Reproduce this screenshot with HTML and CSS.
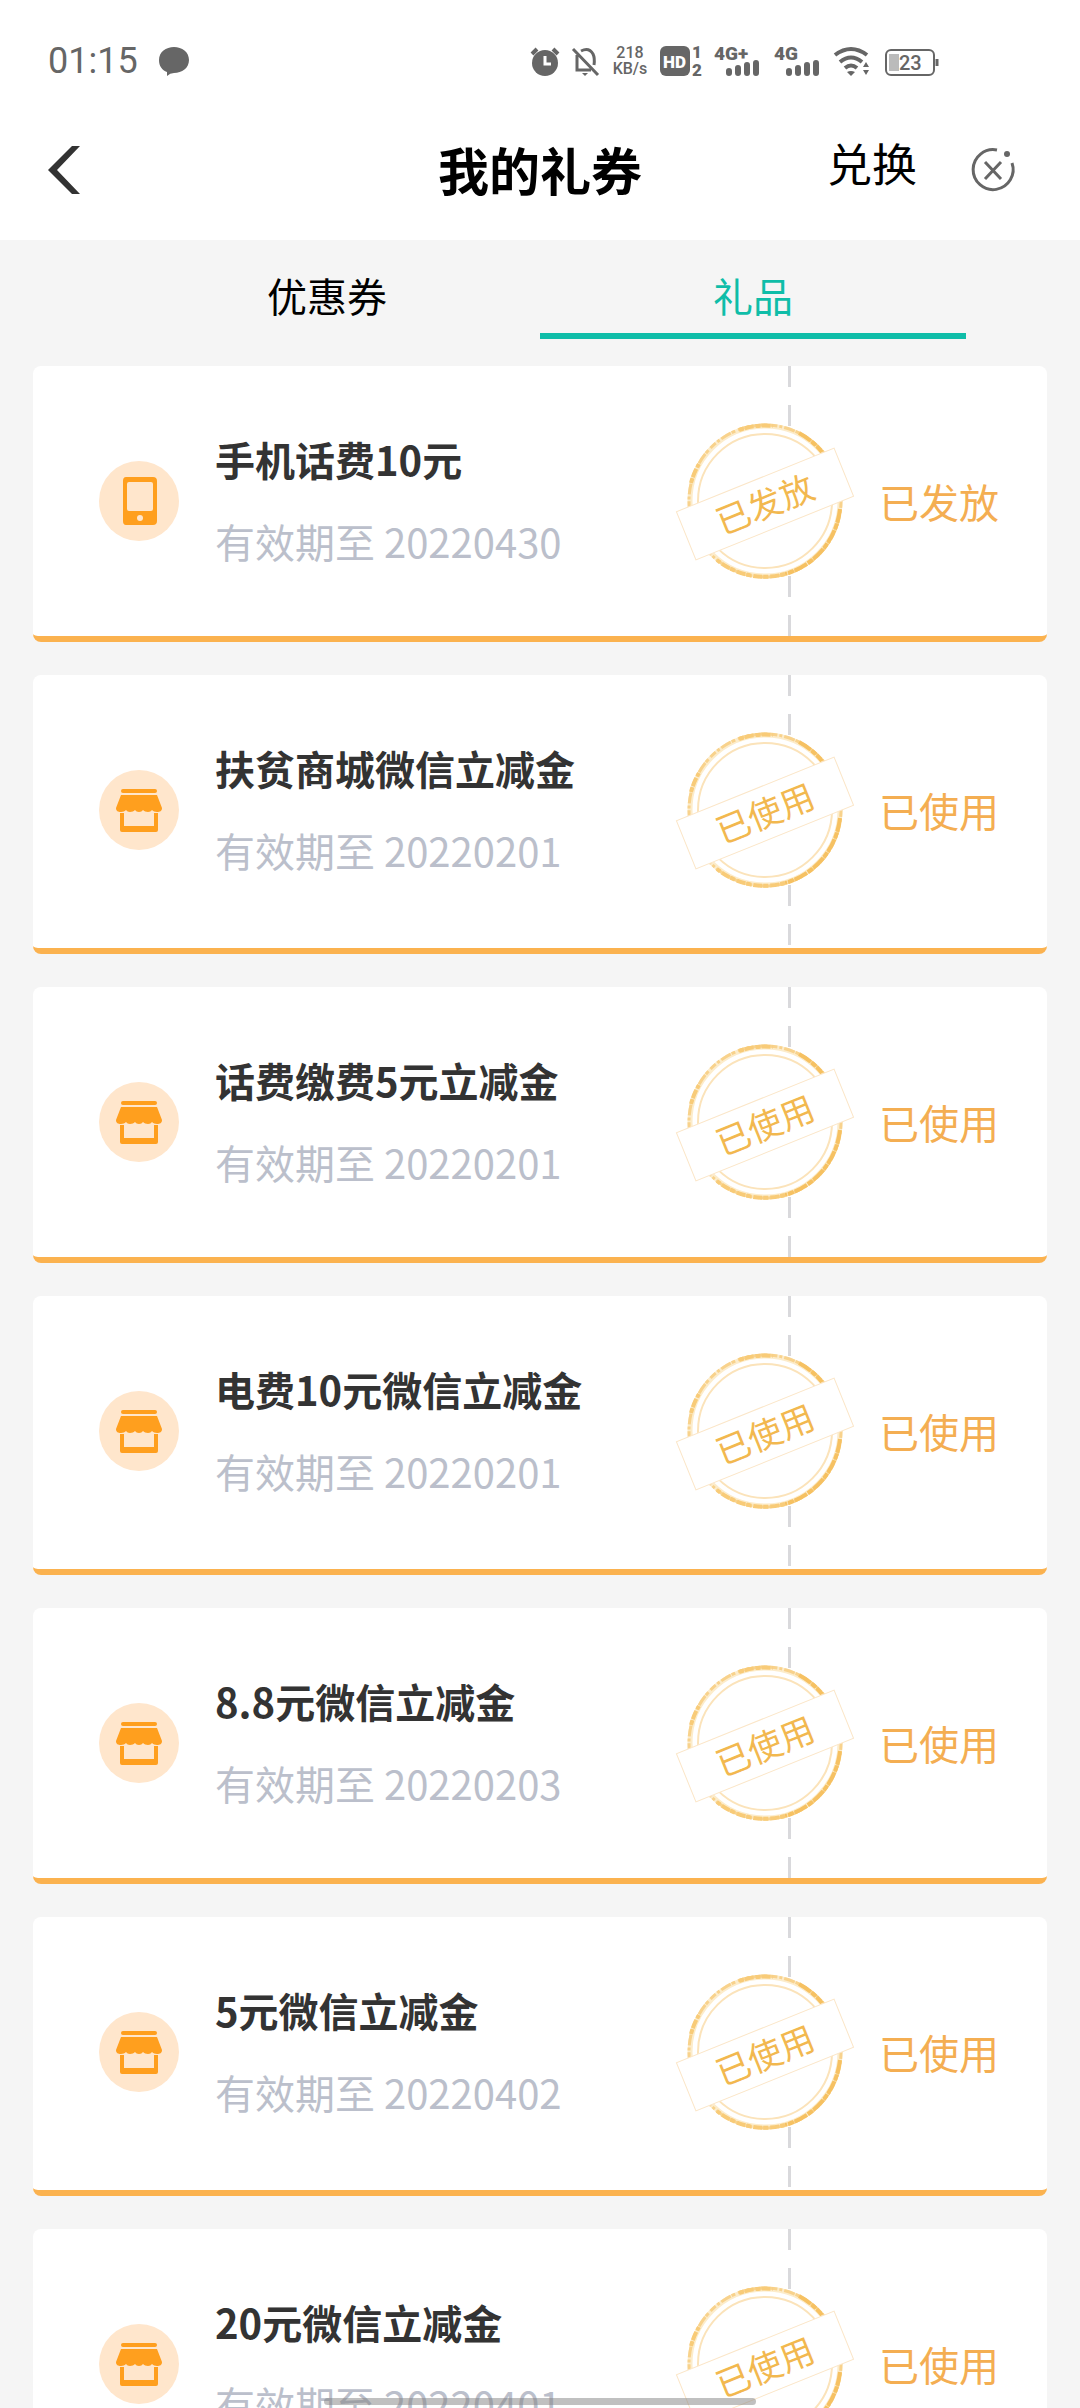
FILE: index.html
```html
<!DOCTYPE html>
<html lang="zh-CN">
<head>
    <meta charset="UTF-8">
    <meta name="viewport" content="width=device-width, initial-scale=1.0">
    <title>我的礼券</title>
    <link rel="stylesheet" href="styles.css">
</head>
<body>
    <!-- Shared icons -->
    <svg class="sprite" aria-hidden="true">
        <symbol id="icon-shop" viewBox="0 0 80 80">
            <rect x="22" y="19" width="36" height="4" rx="2"/>
            <path d="M22 25h36l5 13c0 3-2 4-5 4-2 0-4-1-5-2-1 1-2 2-4 2s-4-1-5-2c-1 1-2 2-4 2s-3-1-4-2c-1 1-3 2-5 2s-3-1-4-2c-1 1-3 2-5 2-3 0-5-1-5-4z"/>
            <path d="M21 43h4v13h30V43h4v17q0 2-2 2H23q-2 0-2-2z"/>
        </symbol>
        <symbol id="icon-phone" viewBox="0 0 80 80">
            <path fill-rule="evenodd" d="M27 16h27q4 0 4 4v40q0 4-4 4H27q-3 0-3-4V20q0-4 3-4zm3 5q-2 0-2 2v25q0 2 2 2h22q2 0 2-2V23q0-2-2-2z"/>
            <circle class="phone-key" cx="41" cy="57" r="3"/>
        </symbol>
        <symbol id="stamp-ring" viewBox="0 0 180 160">
            <circle class="stamp-fill" cx="90" cy="80" r="78"/>
            <circle class="ring-base" cx="90" cy="80" r="75"/>
            <circle class="ring-grain" cx="90" cy="80" r="76"/>
            <circle class="ring-inner" cx="90" cy="80" r="67"/>
            <path class="ring-heavy" d="M124 12A76 76 0 0 1 147 31M165 88A76 76 0 0 1 110 153"/>
            <path class="ring-light" d="M64 9A76 76 0 0 1 98 5M16 62A76 76 0 0 1 24 43M110 153A76 76 0 0 1 42 139"/>
            <rect class="band" x="5" y="57" width="170" height="52" transform="rotate(-22 90 83)"/>
        </symbol>
    </svg>

    <div class="status-bar">
        <span class="clock">01:15</span>
        <svg class="chat" width="30" height="30" viewBox="0 0 30 30"><path d="M15 1c8 0 15 5 15 13s-7 13-15 13q-4 0-7 3v-4C3 24 0 20 0 14 0 6 7 1 15 1z"/></svg>
        <div class="status-icons">
            <svg width="30" height="36" viewBox="0 0 30 36">
                <circle cx="15" cy="20" r="13"/>
                <path class="line" d="M2 11l5-5M28 11l-5-5"/>
                <path class="cut" d="M15 13v8h6"/>
            </svg>
            <svg width="28" height="36" viewBox="0 0 28 36">
                <path class="line thin" d="M5 12v15h14M9 8q8-4 12 3 2 4 1 11M1 6l25 26"/>
                <path d="M10 30h6l-3 3z"/>
            </svg>
            <span class="net-speed"><span>218</span><span>KB/s</span></span>
            <svg width="42" height="36" viewBox="0 0 42 36">
                <rect x="0" y="3" width="30" height="30" rx="6"/>
                <text class="hd" x="3" y="25">HD</text>
                <text class="sim" x="32" y="15">1</text>
                <text class="sim" x="32" y="33">2</text>
            </svg>
            <svg width="48" height="36" viewBox="0 0 48 36">
                <text class="net" x="0" y="17">4G+</text>
                <path class="bars" d="M15 28v2M24 25v5M33 22v8M42 20v10"/>
            </svg>
            <svg width="48" height="36" viewBox="0 0 48 36">
                <text class="net" x="0" y="17">4G</text>
                <path class="bars" d="M15 28v2M24 25v5M33 22v8M42 20v10"/>
            </svg>
            <svg width="38" height="36" viewBox="0 0 38 36">
                <path class="line" d="M1 12q16-12 32 0M6 19q11-9 22 0M11 25q6-5 12 0"/>
                <path d="M13 29q4-2 8 0l-4 4zM29 24l3-5 3 5zM29 27l3 5 3-5z"/>
            </svg>
            <svg width="56" height="36" viewBox="0 0 56 36">
                <rect class="battery" x="2" y="7" width="48" height="25" rx="5"/>
                <rect class="charge" x="5" y="11" width="10" height="17"/>
                <path class="line thin" d="M53 16v7"/>
                <text class="percent" x="15" y="27">23</text>
            </svg>
        </div>
    </div>

    <header class="header">
        <button class="icon-btn back" aria-label="返回">
            <svg width="32" height="48" viewBox="0 0 32 48"><path d="M32 0h-8L0 24l24 24h8L9 24z"/></svg>
        </button>
        <h1>我的礼券</h1>
        <div class="actions">
            <a href="#">兑换</a>
            <button class="icon-btn" aria-label="关闭">
                <svg class="close" width="44" height="44" viewBox="0 0 44 44">
                    <path d="M26 2A20 20 0 1 0 41 15M14 14l16 17M30 14L14 31"/>
                    <circle cx="36" cy="6" r="3"/>
                </svg>
            </button>
        </div>
    </header>

    <nav class="tabs">
        <a href="#">优惠券</a>
        <a href="#" class="active">礼品</a>
    </nav>

    <main class="gift-list">
        <article class="gift">
            <svg class="gift-icon"><use href="#icon-phone"/></svg>
            <div class="gift-info">
                <h2>手机话费10元</h2>
                <p>有效期至 20220430</p>
            </div>
            <div class="divider"></div>
            <svg class="stamp" viewBox="0 0 180 160"><use href="#stamp-ring"/><text x="90" y="96" transform="rotate(-22 90 83)">已发放</text></svg>
            <span class="state">已发放</span>
        </article>
        <article class="gift">
            <svg class="gift-icon"><use href="#icon-shop"/></svg>
            <div class="gift-info">
                <h2>扶贫商城微信立减金</h2>
                <p>有效期至 20220201</p>
            </div>
            <div class="divider"></div>
            <svg class="stamp" viewBox="0 0 180 160"><use href="#stamp-ring"/><text x="90" y="96" transform="rotate(-22 90 83)">已使用</text></svg>
            <span class="state">已使用</span>
        </article>
        <article class="gift">
            <svg class="gift-icon"><use href="#icon-shop"/></svg>
            <div class="gift-info">
                <h2>话费缴费5元立减金</h2>
                <p>有效期至 20220201</p>
            </div>
            <div class="divider"></div>
            <svg class="stamp" viewBox="0 0 180 160"><use href="#stamp-ring"/><text x="90" y="96" transform="rotate(-22 90 83)">已使用</text></svg>
            <span class="state">已使用</span>
        </article>
        <article class="gift">
            <svg class="gift-icon"><use href="#icon-shop"/></svg>
            <div class="gift-info">
                <h2>电费10元微信立减金</h2>
                <p>有效期至 20220201</p>
            </div>
            <div class="divider"></div>
            <svg class="stamp" viewBox="0 0 180 160"><use href="#stamp-ring"/><text x="90" y="96" transform="rotate(-22 90 83)">已使用</text></svg>
            <span class="state">已使用</span>
        </article>
        <article class="gift">
            <svg class="gift-icon"><use href="#icon-shop"/></svg>
            <div class="gift-info">
                <h2>8.8元微信立减金</h2>
                <p>有效期至 20220203</p>
            </div>
            <div class="divider"></div>
            <svg class="stamp" viewBox="0 0 180 160"><use href="#stamp-ring"/><text x="90" y="96" transform="rotate(-22 90 83)">已使用</text></svg>
            <span class="state">已使用</span>
        </article>
        <article class="gift">
            <svg class="gift-icon"><use href="#icon-shop"/></svg>
            <div class="gift-info">
                <h2>5元微信立减金</h2>
                <p>有效期至 20220402</p>
            </div>
            <div class="divider"></div>
            <svg class="stamp" viewBox="0 0 180 160"><use href="#stamp-ring"/><text x="90" y="96" transform="rotate(-22 90 83)">已使用</text></svg>
            <span class="state">已使用</span>
        </article>
        <article class="gift">
            <svg class="gift-icon"><use href="#icon-shop"/></svg>
            <div class="gift-info">
                <h2>20元微信立减金</h2>
                <p>有效期至 20220401</p>
            </div>
            <div class="divider"></div>
            <svg class="stamp" viewBox="0 0 180 160"><use href="#stamp-ring"/><text x="90" y="96" transform="rotate(-22 90 83)">已使用</text></svg>
            <span class="state">已使用</span>
        </article>
    </main>

    <div class="home-bar"></div>
</body>
</html>
```

FILE: styles.css
```css
/* General Styles */
* {
    box-sizing: border-box;
}

body {
    margin: 0;
    height: 100vh;
    overflow: hidden;
    display: flex;
    flex-direction: column;
    background-color: #f5f5f5;
    font-family: 'Noto Sans CJK SC', sans-serif;
    color: #000;
}

h1, h2, p {
    margin: 0;
}

a {
    color: inherit;
    text-decoration: none;
}

svg {
    display: block;
    flex-shrink: 0;
    overflow: visible;
}

.sprite {
    position: absolute;
    width: 0;
    height: 0;
}

/* Phone status bar */
.status-bar {
    display: flex;
    align-items: center;
    height: 100px;
    padding: 22px 140px 0 48px;
    background-color: white;
    color: #666;
    fill: #666;
    font-family: Roboto, sans-serif;
}

.clock {
    font-size: 36px;
}

.chat {
    margin-left: 21px;
}

.status-icons {
    display: flex;
    align-items: center;
    gap: 12px;
    margin-left: auto;
}

.net-speed {
    display: flex;
    flex-direction: column;
    align-items: center;
    width: 36px;
    font-size: 16px;
    font-weight: 500;
    line-height: 16px;
}

.line {
    fill: none;
    stroke: #666;
    stroke-width: 4;
}

.thin {
    stroke-width: 3;
}

.cut {
    fill: none;
    stroke: white;
    stroke-width: 3;
}

.bars {
    fill: none;
    stroke: #666;
    stroke-width: 6;
    stroke-linecap: round;
}

.hd {
    fill: white;
    font-size: 17px;
    font-weight: 900;
}

.sim {
    font-size: 17px;
    font-weight: 900;
}

.net {
    font-size: 19px;
    font-weight: 900;
}

.battery {
    fill: none;
    stroke: #666;
    stroke-width: 2;
}

.charge {
    fill: #bbb;
}

.percent {
    font-size: 20px;
    font-weight: 500;
}

/* Header */
.header {
    display: grid;
    grid-template-columns: 1fr auto 1fr;
    align-items: center;
    height: 140px;
    padding: 0 48px;
    background-color: white;
}

.header h1 {
    padding-bottom: 2px;
    font-size: 51px;
    font-weight: 700;
}

.icon-btn {
    padding: 0;
    border: none;
    background: none;
    cursor: pointer;
}

.back {
    justify-self: start;
    fill: #333;
}

.actions {
    display: flex;
    align-items: center;
    justify-content: flex-end;
    gap: 54px;
    padding-right: 17px;
}

.actions a {
    padding-bottom: 16px;
    font-size: 45px;
}

.close {
    fill: #666;
}

.close path {
    fill: none;
    stroke: #666;
    stroke-width: 3;
}

/* Tabs */
.tabs {
    display: flex;
    padding: 0 114px;
}

.tabs a {
    flex: 1;
    padding: 25px 0 8px;
    border-bottom: 6px solid transparent;
    font-size: 40px;
    line-height: 60px;
    text-align: center;
}

.tabs .active {
    color: #0fbda8;
    border-bottom-color: #0fbda8;
}

/* Gift cards */
.gift-list {
    display: flex;
    flex-direction: column;
    gap: 33px;
    flex: 1;
    min-height: 0;
    padding: 27px 33px 0;
}

.gift {
    position: relative;
    display: flex;
    align-items: center;
    flex-shrink: 0;
    min-height: 276px;
    padding: 0 48px 0 66px;
    border-bottom: 6px solid #fbb24f;
    border-radius: 8px;
    background-color: white;
}

.gift:nth-child(even) {
    padding-bottom: 3px;
    min-height: 279px;
}

.gift-icon {
    width: 80px;
    height: 80px;
    border-radius: 50%;
    background-color: #ffe6cc;
    fill: #ff9f1e;
}

.phone-key {
    fill: #ffe6cc;
}

.gift-info {
    flex: 1;
    margin-left: 36px;
    padding-bottom: 2px;
}

.gift-info h2 {
    padding-bottom: 22px;
    font-size: 40px;
    font-weight: 700;
    line-height: 60px;
    color: #333;
}

.gift-info p {
    font-size: 40px;
    line-height: 60px;
    color: #bbbfcb;
}

/* Dashes start from both ends and meet behind the stamp */
.divider {
    align-self: stretch;
    width: 3px;
    margin-right: 88px;
    background-image:
        repeating-linear-gradient(to bottom, #d9d9dc 0 21px, transparent 21px 39px),
        repeating-linear-gradient(to top, #d9d9dc 0 21px, transparent 21px 39px);
    background-position: top, bottom;
    background-size: 100% 50%;
    background-repeat: no-repeat;
}

.state {
    font-size: 40px;
    line-height: 60px;
    color: #f4ae52;
}

.stamp {
    position: absolute;
    top: 55px;
    right: 192px;
    width: 180px;
    height: 160px;
}

.stamp text {
    fill: #f2b84f;
    font-size: 34px;
    text-anchor: middle;
}

.stamp-fill, .band {
    fill: white;
}

.band {
    stroke: #fbe6c8;
    stroke-width: 1;
}

.ring-base, .ring-grain, .ring-inner, .ring-heavy, .ring-light {
    fill: none;
}

.ring-base {
    stroke: #fceccb;
    stroke-width: 5;
}

.ring-grain {
    stroke: #f8d28c;
    stroke-width: 3;
    stroke-dasharray: 7 2 3 2 11 1 4 3;
}

.ring-inner {
    stroke: #fbe3ba;
    stroke-width: 2;
}

.ring-heavy {
    stroke: #f6c162;
    stroke-width: 4;
    stroke-dasharray: 14 1 6 1;
}

.ring-light {
    stroke: #f8cb78;
    stroke-width: 4;
    stroke-dasharray: 5 1 9 2;
}

/* Gesture bar */
.home-bar {
    position: fixed;
    bottom: 3px;
    left: 30%;
    width: 40%;
    height: 7px;
    border-radius: 4px;
    background-color: rgba(130, 130, 130, 0.5);
}
```
